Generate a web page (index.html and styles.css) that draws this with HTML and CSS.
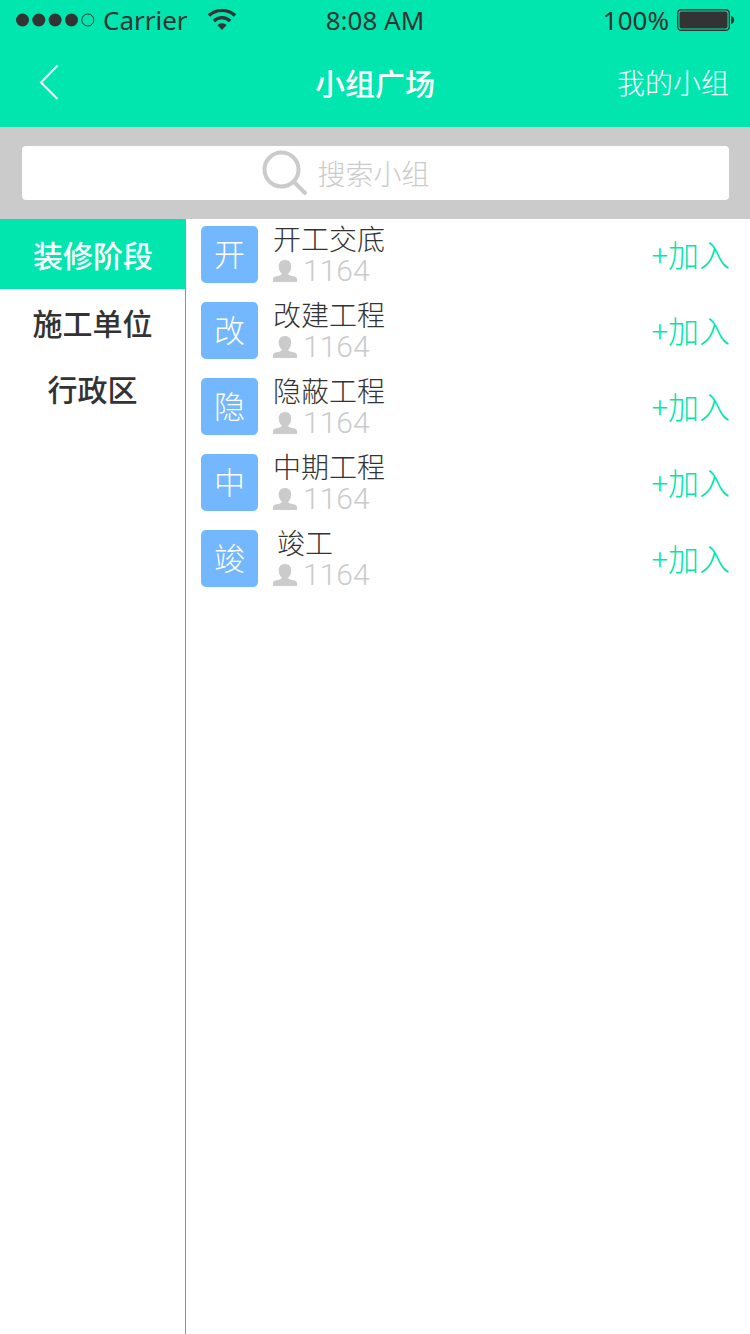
FILE: index.html
```html
<!DOCTYPE html>
<html lang="zh-CN">
<head>
<meta charset="utf-8">
<meta name="viewport" content="width=device-width, initial-scale=1">
<title>小组广场</title>
<link rel="stylesheet" href="styles.css">
</head>
<body>
<svg class="defs" aria-hidden="true">
  <symbol id="person" viewBox="0 0 24 22">
    <path d="M12 0C8 0 5.700 2.800 5.700 6.500C5.700 9.500 7 12 8.600 13.500V14.600C8.200 15.500 4 16 1.800 16.800C.5 17.300 0 18 0 19.300V22H24V19.300C24 18 23.500 17.300 22.200 16.800C20 16 15.800 15.500 15.400 14.600V13.500C17 12 18.300 9.500 18.300 6.500C18.300 2.800 16 0 12 0Z"/>
  </symbol>
</svg>
<div class="app">
  <header class="header">
    <div class="status">
      <div class="status-left">
        <svg class="signal" viewBox="0 0 80 14" aria-hidden="true">
          <circle cx="7.500" cy="7" r="6.500"/><circle cx="23.800" cy="7" r="6.500"/><circle cx="40.100" cy="7" r="6.500"/><circle cx="56.500" cy="7" r="6.500"/>
          <circle class="signal-off" cx="72.800" cy="7" r="6"/>
        </svg>
        <span>Carrier</span>
        <svg class="wifi" viewBox="0 0 28 22" aria-hidden="true">
          <path class="wifi-arc" d="M1 6.500C8.500-.3 19.500-.3 27 6.500M5.800 12C10.500 7.500 17.500 7.500 22.200 12"/>
          <path d="M9.500 16.200C12 13.600 16 13.600 18.500 16.200L14 21Z"/>
        </svg>
      </div>
      <span class="time">8:08 AM</span>
      <div class="status-right">
        <span>100%</span>
        <svg class="battery" viewBox="0 0 58 22" aria-hidden="true">
          <rect class="battery-case" x=".7" y=".7" width="51.600" height="20.600" rx="3.500"/>
          <rect x="2.500" y="2.500" width="48" height="17" rx="2"/>
          <path d="M54 7C58.300 8 58.300 14 54 15Z"/>
        </svg>
      </div>
    </div>
    <nav class="navbar">
      <button class="back" type="button" aria-label="返回">
        <svg viewBox="0 0 20 36" aria-hidden="true"><path d="M18.500 1.500L2 18.500L18.500 35"/></svg>
      </button>
      <h1 class="title">小组广场</h1>
      <a class="mine" href="#mine">我的小组</a>
    </nav>
  </header>
  <form class="search" role="search">
    <label class="search-box">
      <svg class="search-icon" viewBox="0 0 46 46" aria-hidden="true"><circle cx="19.500" cy="19.500" r="17"/><path d="M31.500 31.500L43 43"/></svg>
      <input class="search-input" type="text" placeholder="搜索小组" aria-label="搜索小组">
    </label>
  </form>
  <div class="content">
    <nav class="sidebar">
      <button class="tab tab-active" type="button">装修阶段</button>
      <button class="tab" type="button">施工单位</button>
      <button class="tab" type="button">行政区</button>
    </nav>
    <main class="groups">
      <article class="group">
        <span class="avatar">开</span>
        <div class="info"><h2 class="name">开工交底</h2><p class="members"><svg class="person" aria-hidden="true"><use href="#person"/></svg>1164</p></div>
        <button class="join" type="button">+加入</button>
      </article>
      <article class="group">
        <span class="avatar">改</span>
        <div class="info"><h2 class="name">改建工程</h2><p class="members"><svg class="person" aria-hidden="true"><use href="#person"/></svg>1164</p></div>
        <button class="join" type="button">+加入</button>
      </article>
      <article class="group">
        <span class="avatar">隐</span>
        <div class="info"><h2 class="name">隐蔽工程</h2><p class="members"><svg class="person" aria-hidden="true"><use href="#person"/></svg>1164</p></div>
        <button class="join" type="button">+加入</button>
      </article>
      <article class="group">
        <span class="avatar">中</span>
        <div class="info"><h2 class="name">中期工程</h2><p class="members"><svg class="person" aria-hidden="true"><use href="#person"/></svg>1164</p></div>
        <button class="join" type="button">+加入</button>
      </article>
      <article class="group">
        <span class="avatar">竣</span>
        <div class="info"><h2 class="name name-short">竣工</h2><p class="members"><svg class="person" aria-hidden="true"><use href="#person"/></svg>1164</p></div>
        <button class="join" type="button">+加入</button>
      </article>
    </main>
  </div>
</div>
</body>
</html>
```

FILE: styles.css
```css
:root {
  --green: #00e6ae;
  --gray: #cbcbcb;
  --ink: #333;
}

* { box-sizing: border-box; }

body {
  margin: 0;
  background: #fff;
  color: var(--ink);
  font-family: "Noto Sans CJK SC", sans-serif;
  font-weight: 300;
}

button {
  padding: 0;
  border: 0;
  background: none;
  color: inherit;
  font: inherit;
  cursor: pointer;
}

h1, h2, p { margin: 0; }

svg { display: block; flex: none; }

.defs {
  position: absolute;
  width: 0;
  height: 0;
}

.app {
  display: flex;
  flex-direction: column;
  min-height: 100vh;
}

.header { background: var(--green); }

.status {
  display: grid;
  grid-template-columns: 1fr auto 1fr;
  align-items: center;
  height: 40px;
  padding: 0 15px;
  font-family: "Noto Sans", sans-serif;
  font-size: 26px;
  font-weight: 400;
  line-height: 40px;
  fill: var(--ink);
}

.status-left, .status-right {
  display: flex;
  align-items: center;
  gap: 8px;
}

.status-right { justify-content: flex-end; }

.signal { width: 80px; height: 14px; }
.signal-off { fill: none; stroke: var(--ink); stroke-width: 1; }
.wifi { width: 28px; height: 22px; margin-left: 12px; }
.wifi-arc { fill: none; stroke: var(--ink); stroke-width: 3.400; }
.battery { width: 58px; height: 22px; }
.battery-case { fill: none; stroke: var(--ink); stroke-width: 1.400; }

.navbar {
  display: grid;
  grid-template-columns: 1fr auto 1fr;
  align-items: center;
  height: 87px;
  padding: 0 21px 4px;
  color: #fff;
}

.back {
  justify-self: start;
  padding: 0 18px;
}

.back svg {
  width: 20px;
  height: 36px;
  fill: none;
  stroke: #fff;
  stroke-width: 2;
}

.title {
  font-size: 30px;
  font-weight: 500;
}

.mine {
  justify-self: end;
  color: inherit;
  font-size: 28px;
  text-decoration: none;
}

.search {
  padding: 19px 21px 19px 22px;
  background: var(--gray);
}

.search-box {
  display: flex;
  align-items: center;
  justify-content: center;
  gap: 10px;
  height: 54px;
  border-radius: 4px;
  background: #fff;
}

.search-icon {
  width: 46px;
  height: 46px;
  fill: none;
  stroke: var(--gray);
  stroke-width: 4;
  stroke-linecap: round;
}

.search-input {
  width: 172px;
  height: 54px;
  padding: 0;
  border: 0;
  outline: 0;
  background: none;
  color: var(--ink);
  font: inherit;
  font-size: 28px;
}

.search-input::placeholder { color: var(--gray); opacity: 1; }

.content {
  display: flex;
  flex: 1;
}

.sidebar {
  display: flex;
  flex: none;
  flex-direction: column;
  width: 186px;
  border-right: 1px solid #1fcba2;
}

.tab {
  height: 66px;
  font-size: 30px;
  font-weight: 500;
}

.tab-active {
  height: 70px;
  margin-right: -1px;
  background: var(--green);
  color: #fff;
}

.groups {
  display: flex;
  flex: 1;
  flex-direction: column;
  gap: 10px;
  padding: 2px 20px 2px 15px;
}

.group {
  display: flex;
  align-items: center;
  gap: 15px;
  height: 66px;
}

.avatar {
  width: 57px;
  height: 57px;
  border-radius: 5px;
  background: #73b7ff;
  color: #fff;
  font-size: 31px;
  line-height: 54px;
  text-align: center;
}

.info {
  flex: 1;
  padding-top: 2px;
}

.name {
  font-size: 28px;
  font-weight: inherit;
  line-height: 30px;
}

.name-short { padding-left: 4px; }

.members {
  display: flex;
  align-items: center;
  gap: 6px;
  margin-top: 2px;
  color: var(--gray);
  font-family: Roboto, sans-serif;
  font-size: 30px;
  font-weight: 300;
  line-height: 32px;
}

.person {
  width: 24px;
  height: 22px;
  fill: var(--gray);
}

.join {
  padding-bottom: 2px;
  color: var(--green);
  font-size: 31px;
}
```
